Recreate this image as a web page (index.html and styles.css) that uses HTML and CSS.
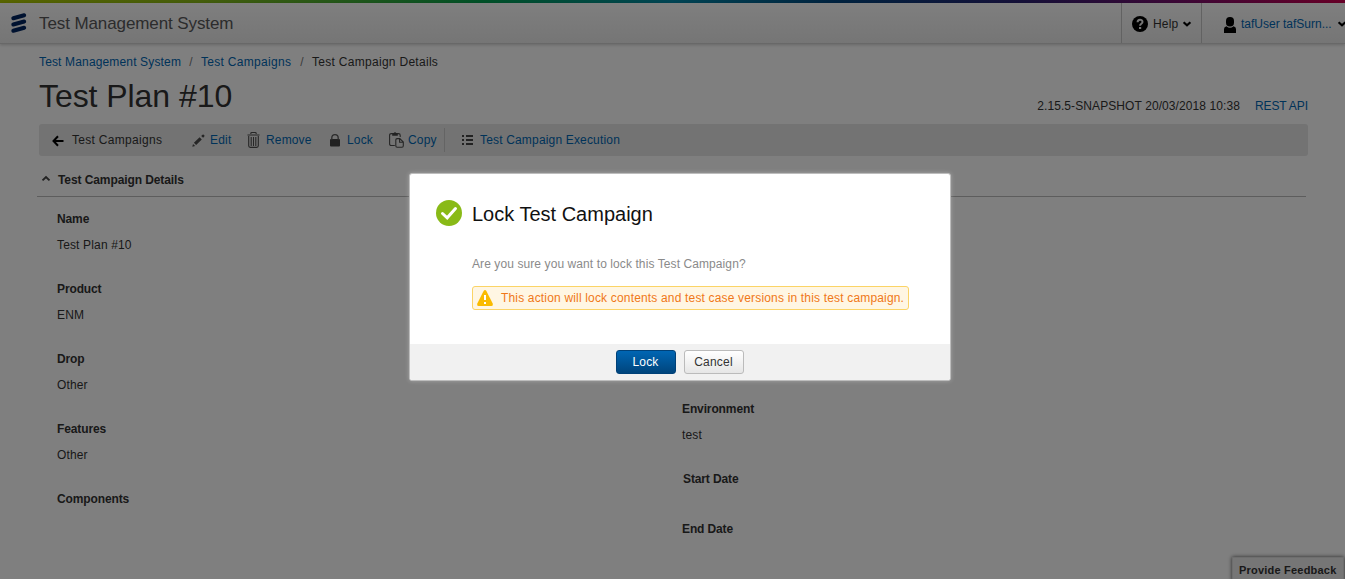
FILE: index.html
```html
<!DOCTYPE html>
<html lang="en">
<head>
<meta charset="utf-8">
<title>Test Management System</title>
<link rel="stylesheet" href="styles.css">
</head>
<body>
<div class="rainbow"></div>
<header class="topbar">
  <svg class="logo" width="16" height="20" viewBox="0 0 16 20"><g stroke="#002561" stroke-width="4" stroke-linecap="round"><path d="M2.3 5.2 13.2 2.2M2.3 11.5 13.2 8.5M2.3 17.8 13.2 14.8"/></g></svg>
  <span class="brand">Test Management System</span>
  <div class="help">
    <svg width="16" height="16" viewBox="0 0 16 16"><circle cx="8" cy="8" r="8"/><path d="M5.6 6.3C5.6 3 10.5 3 10.5 6 10.5 7.8 8.1 7.8 8.1 9.7" fill="none" stroke="#eee" stroke-width="2"/><rect x="7" y="11" width="2.2" height="2" fill="#eee"/></svg>
    <span class="help-text">Help</span>
    <svg width="8" height="6" viewBox="0 0 8 6"><path d="M.6 1.2 4 4.2 7.4 1.2" fill="none" stroke="#000" stroke-width="2.2"/></svg>
  </div>
  <div class="user">
    <svg width="12" height="16" viewBox="0 0 12 16"><rect x="2" y="0" width="8" height="9.5" rx="3.8"/><path d="M0 16V12Q0 9.7 2.5 9.3Q6 12.4 9.5 9.3Q12 9.7 12 12V16Z"/></svg>
    <a class="user-name">tafUser tafSurn...</a>
    <svg class="user-caret" width="8" height="6" viewBox="0 0 8 6"><path d="M.6 1.2 4 4.2 7.4 1.2" fill="none" stroke="#000" stroke-width="2.2"/></svg>
  </div>
</header>
<main class="page">
  <nav class="crumbs"><a class="crumb-home">Test Management System</a><span class="slash">/</span><a class="crumb-list">Test Campaigns</a><span class="slash">/</span><span class="crumb-here">Test Campaign Details</span></nav>
  <div class="heading">
    <h1>Test Plan #10</h1>
    <div class="version"><span class="build">2.15.5-SNAPSHOT 20/03/2018 10:38</span><a class="rest">REST API</a></div>
  </div>
  <div class="toolbar">
    <span class="tool back"><svg width="12" height="12" viewBox="0 0 12 12"><path d="M11.5 6H1.5M6 1.3 1.5 6 6 10.7" fill="none" stroke="#000" stroke-width="2"/></svg><span class="t-back">Test Campaigns</span></span>
    <a class="tool edit"><svg width="13" height="13" viewBox="0 0 13 13"><path d="M.3 12.7 1 9.9 3.2 12ZM1.9 8.8 7.6 3.2 9.8 5.4 4.1 11ZM9.2 1.9 10.5.7Q11.3.1 12.1.9 12.9 1.7 12.3 2.5L11.1 3.8Z" fill="#4c4c4c"/></svg><span class="t-edit">Edit</span></a>
    <a class="tool remove"><svg width="13" height="16" viewBox="0 0 13 16"><path d="M3.8 2V1.4Q3.8.5 4.8.5H8.2Q9.2.5 9.2 1.4V2M.5 3H12.5M1.7 4V13.8Q1.7 15.4 3.3 15.4H9.7Q11.3 15.4 11.3 13.8V4M4.2 5V14M6.5 5V14M8.8 5V14" fill="none" stroke="#4c4c4c" stroke-width="1.1"/></svg><span class="t-remove">Remove</span></a>
    <a class="tool lock"><svg width="10" height="13" viewBox="0 0 10 13"><rect y="5" width="10" height="7.5" rx="1" fill="#444"/><path d="M1.8 6V4Q1.8.7 5 .7 8.2.7 8.2 4V6" fill="none" stroke="#555" stroke-width="1.3"/></svg><span class="t-lock">Lock</span></a>
    <a class="tool copy"><svg width="15" height="16" viewBox="0 0 15 16"><path d="M5.8 13.5H2.3Q.6 13.5.6 12V3.2Q.6 1.6 2.3 1.6H9.5Q11.2 1.6 11.2 3.2V5" fill="none" stroke="#4c4c4c" stroke-width="1.1"/><path d="M3.2 3.8V1.5H4.5Q5 .3 6 .3T7.5 1.5H8.8V3.8Z" fill="#444"/><path d="M6.8 8Q6.8 6.6 8.1 6.6H10.8L14.3 10V13.8Q14.3 15.2 13 15.2H8.1Q6.8 15.2 6.8 13.8ZM10.6 7V10.2H14" fill="none" stroke="#4c4c4c" stroke-width="1.1"/></svg><span class="t-copy">Copy</span></a>
    <span class="divider"></span>
    <a class="tool exec"><svg width="12" height="11" viewBox="0 0 12 11"><path d="M0 0h2v2H0zM4 0h7v2H4zM0 4h2v2H0zM4 4h7v2H4zM0 8h2v2H0zM4 8h7v2H4z" fill="#444"/></svg><span class="t-exec">Test Campaign Execution</span></a>
  </div>
  <section class="details">
    <div class="section-head"><svg width="8" height="6" viewBox="0 0 8 6"><path d="M.5 4.4 4 1 7.5 4.4" fill="none" stroke="#444" stroke-width="1.9"/></svg><h2>Test Campaign Details</h2></div>
    <div class="columns">
      <dl class="col">
        <dt>Name</dt><dd>Test Plan #10</dd>
        <dt>Product</dt><dd>ENM</dd>
        <dt>Drop</dt><dd>Other</dd>
        <dt>Features</dt><dd>Other</dd>
        <dt>Components</dt>
      </dl>
      <dl class="col right">
        <dt>Environment</dt><dd>test</dd>
        <dt class="start">Start Date</dt><dt>End Date</dt>
      </dl>
    </div>
  </section>
</main>
<div class="feedback">Provide Feedback</div>
<div class="overlay">
  <div class="dialog">
    <div class="dialog-body">
      <svg class="ok" width="26" height="26" viewBox="0 0 26 26"><circle cx="13" cy="13" r="13" fill="#89ba17"/><path d="M6.5 13.5 11.2 17.8 19.5 8.5" fill="none" stroke="#fff" stroke-width="3" stroke-linecap="round"/></svg>
      <div class="dialog-content">
        <h3>Lock Test Campaign</h3>
        <p>Are you sure you want to lock this Test Campaign?</p>
        <div class="warning"><svg width="16" height="16" viewBox="0 0 16 16"><path d="M6.6 1Q8-.8 9.4 1L15.8 13.8Q16.3 16 14.5 16H1.5Q-.3 16 .2 13.8Z" fill="#fabb00"/><path d="M7 5h2v5H7zM7 12h2v2H7z" fill="#fff"/></svg><span>This action will lock contents and test case versions in this test campaign.</span></div>
      </div>
    </div>
    <div class="dialog-foot"><button class="btn primary">Lock</button><button class="btn">Cancel</button></div>
  </div>
</div>
</body>
</html>
```
FILE: styles.css
```css
* { box-sizing: border-box; }
body { margin: 0; height: 579px; overflow: hidden; background: #fff; color: #333; font: 12px/16px "Liberation Sans", Arial, sans-serif; letter-spacing: .09px; }
h1, h2, h3, p, dl, dd { margin: 0; font-weight: normal; }
svg { display: block; flex: none; overflow: visible; }
a { color: #0066b3; white-space: nowrap; }
span { white-space: nowrap; }
.rainbow { height: 3px; background: linear-gradient(90deg, #b0c800 0, #89ba17 15%, #00a04f 36%, #0088a8 50%, #00467f 62%, #2b2171 76%, #7a0f6c 88%, #d0004f 100%); }
.topbar { display: flex; align-items: center; height: 41px; padding-left: 11px; background: linear-gradient(#fefefe, #ebebeb); border-bottom: 1px solid #d0d0d0; box-shadow: 0 1px 3px rgba(0,0,0,.2); }
.brand { margin: 1px 0 0 12px; font-size: 17px; line-height: 20px; color: #58585a; letter-spacing: -.1px; flex: 1; }
.help, .user { display: flex; align-items: center; align-self: stretch; border-left: 1px solid #c4c4c4; }
.help { width: 80px; padding: 2px 0 0 10px; }
.help-text { margin: 0 5px 0 5px; letter-spacing: .2px; }
.user { width: 144px; padding: 2px 0 0 22px; }
.user svg { margin-top: 2px; }
.user-name { width: 92px; margin-left: 5px; flex: none; letter-spacing: 0; }
.user .user-caret { margin: 0 0 0 5px; }
.page { padding: 10px 37px 0 39px; }
.crumbs { display: flex; }
.crumb-home { width: 142px; letter-spacing: .15px; }
.crumb-list { width: 91px; letter-spacing: .3px; }
.crumb-here { letter-spacing: .29px; }
.slash { width: 20px; text-align: center; color: #777; }
.heading { display: flex; justify-content: space-between; height: 54px; }
h1 { font-size: 32px; line-height: 36px; margin-top: 8px; letter-spacing: -.06px; }
.version { display: flex; margin-top: 28px; }
.rest { width: 53px; margin-left: 15px; letter-spacing: -.12px; }
.toolbar { display: flex; align-items: center; height: 32px; background: #e6e6e6; border-radius: 3px; padding-left: 13px; }
.tool { display: flex; align-items: center; }
.back svg { margin: 1px 8px 0 0; }
.t-back { width: 91px; letter-spacing: .3px; }
.edit { margin-left: 29px; }
.edit svg { margin-right: 5px; }
.t-edit { width: 22px; letter-spacing: .2px; }
.remove { margin-left: 15px; }
.remove svg { margin-right: 6px; }
.t-remove { width: 46px; letter-spacing: .15px; }
.lock { margin-left: 18px; }
.lock svg { margin-right: 7px; }
.t-lock { width: 26px; letter-spacing: .15px; }
.copy { margin-left: 16px; }
.copy svg { margin-right: 4px; }
.t-copy { width: 29px; letter-spacing: .15px; }
.divider { width: 1px; height: 24px; background: #c8c8c8; margin: 0 17px 0 7px; }
.exec svg { margin-right: 6px; }
.t-exec { letter-spacing: .17px; }
.details { margin: 0 2px 0 -2px; }
.section-head { display: flex; align-items: center; height: 41px; padding: 8px 0 0 5px; border-bottom: 1px solid #bbb; }
.section-head svg { margin: 0 8px 2px 0; }
h2 { font-size: 12px; font-weight: bold; letter-spacing: -.09px; }
.columns { display: flex; padding: 14px 0 0 20px; }
.col { width: 625px; flex: none; }
.right { padding-top: 190px; }
dt { font-weight: bold; margin-bottom: 10px; letter-spacing: -.12px; }
dd { margin-bottom: 28px; letter-spacing: .15px; }
.start { margin-bottom: 34px; padding-left: 1px; }
.feedback { position: absolute; left: 1232px; top: 557px; width: 112px; height: 24px; padding: 4px 0 0 6px; background: #ececec; border: 1px solid #ddd; box-shadow: 0 0 4px rgba(0,0,0,.7); font-size: 11px; font-weight: bold; letter-spacing: .21px; white-space: nowrap; }
.overlay { position: absolute; inset: 0; background: rgba(0,0,0,.5); }
.dialog { width: 542px; height: 208px; margin: 173px 0 0 409px; border: 1px solid #bdbdbd; border-radius: 3px; background: #fff; box-shadow: 0 0 4px rgba(255,255,255,.3); display: flex; flex-direction: column; }
.dialog-body { display: flex; flex: 1; padding: 26px 0 0 26px; }
.dialog-content { margin-left: 10px; }
h3 { font-size: 20px; line-height: 24px; margin-top: 2px; color: #111; letter-spacing: 0; }
p { margin-top: 30px; color: #8a8a8a; }
.warning { display: flex; align-items: center; width: 437px; height: 24px; margin-top: 14px; padding-left: 4px; background: #fff6e3; border: 1px solid #fbd466; border-radius: 3px; color: #f07818; letter-spacing: .17px; }
.warning span { margin-left: 8px; }
.dialog-foot { display: flex; justify-content: center; align-items: center; gap: 8px; height: 36px; padding-right: 1px; background: #f1f1f1; border-radius: 0 0 2px 2px; }
.btn { width: 60px; height: 24px; padding: 0; border: 1px solid #bbb; border-radius: 3px; background: linear-gradient(#fff, #e6e6e6); color: #333; font: inherit; letter-spacing: .2px; }
.primary { border-color: #004178; background: linear-gradient(#0066b3, #00457c); color: #fff; }
```
